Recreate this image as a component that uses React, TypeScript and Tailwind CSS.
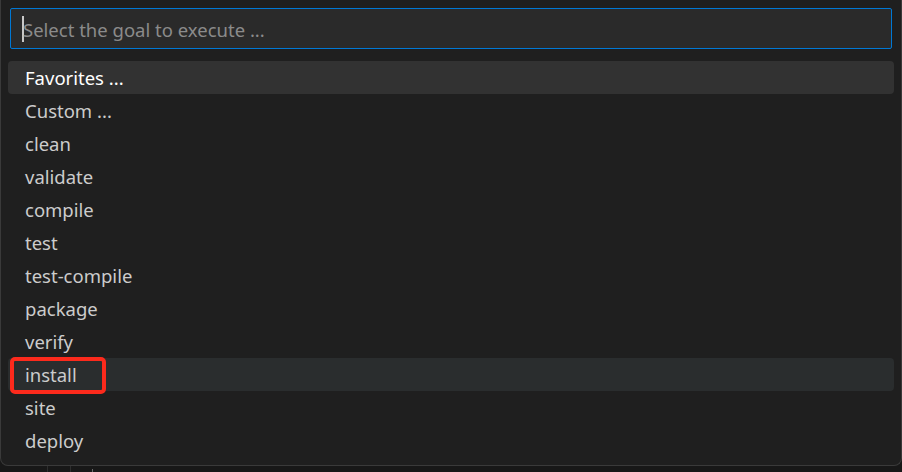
const goals = [
  'Favorites ...',
  'Custom ...',
  'clean',
  'validate',
  'compile',
  'test',
  'test-compile',
  'package',
  'verify',
  'install',
  'site',
  'deploy',
];

export default function App() {
  return (
    <div
      className="w-[902px] h-[472px] bg-[#181818] flex flex-col overflow-hidden"
      style={{ fontFamily: '"Noto Sans", "Open Sans", sans-serif' }}
    >
      <div className="h-[466px] w-[902px] shrink-0 bg-[#1f1f1f] border border-t-0 border-[#3a3a3a] rounded-b-[8px] flex flex-col">
        <div className="mx-[9px] mt-[8px] h-[41px] bg-[#2a2a2a] border border-[#0078d4] rounded-[2px] flex items-center pl-[11px]">
          <div className="w-[2px] h-[26px] bg-[#c8c8c8]" />
          <span className="text-[18.5px] text-[#8b8b8b] leading-none -ml-[1px] pt-[3px]">Select the goal to execute ...</span>
        </div>
        <div className="mt-[12px] flex flex-col px-[7px]">
          {goals.map((g, i) => (
            <div
              key={g}
              className={
                'relative h-[33px] flex items-center pl-[17px] pt-[1px] rounded-[4px] text-[18.5px] leading-none ' +
                (i === 0
                  ? 'bg-[#323232] text-white'
                  : g === 'install'
                  ? 'bg-[#2a2d2e] text-[#cccccc]'
                  : 'text-[#cccccc]')
              }
            >
              {g}
              {g === 'install' && (
                <div className="absolute left-[2px] -top-[1px] w-[96px] h-[37px] border-[4px] border-[#fc2a1c] rounded-[5px]" />
              )}
            </div>
          ))}
        </div>
      </div>
      <div className="flex-1 flex">
        <div className="w-[48px] border-r border-[#2e2e2e]" />
        <div className="w-[23px] border-r border-[#2e2e2e]" />
        <div className="ml-[21px] mt-[3px] w-[1px] h-[3px] bg-[#6a6a6a]" />
      </div>
    </div>
  );
}
